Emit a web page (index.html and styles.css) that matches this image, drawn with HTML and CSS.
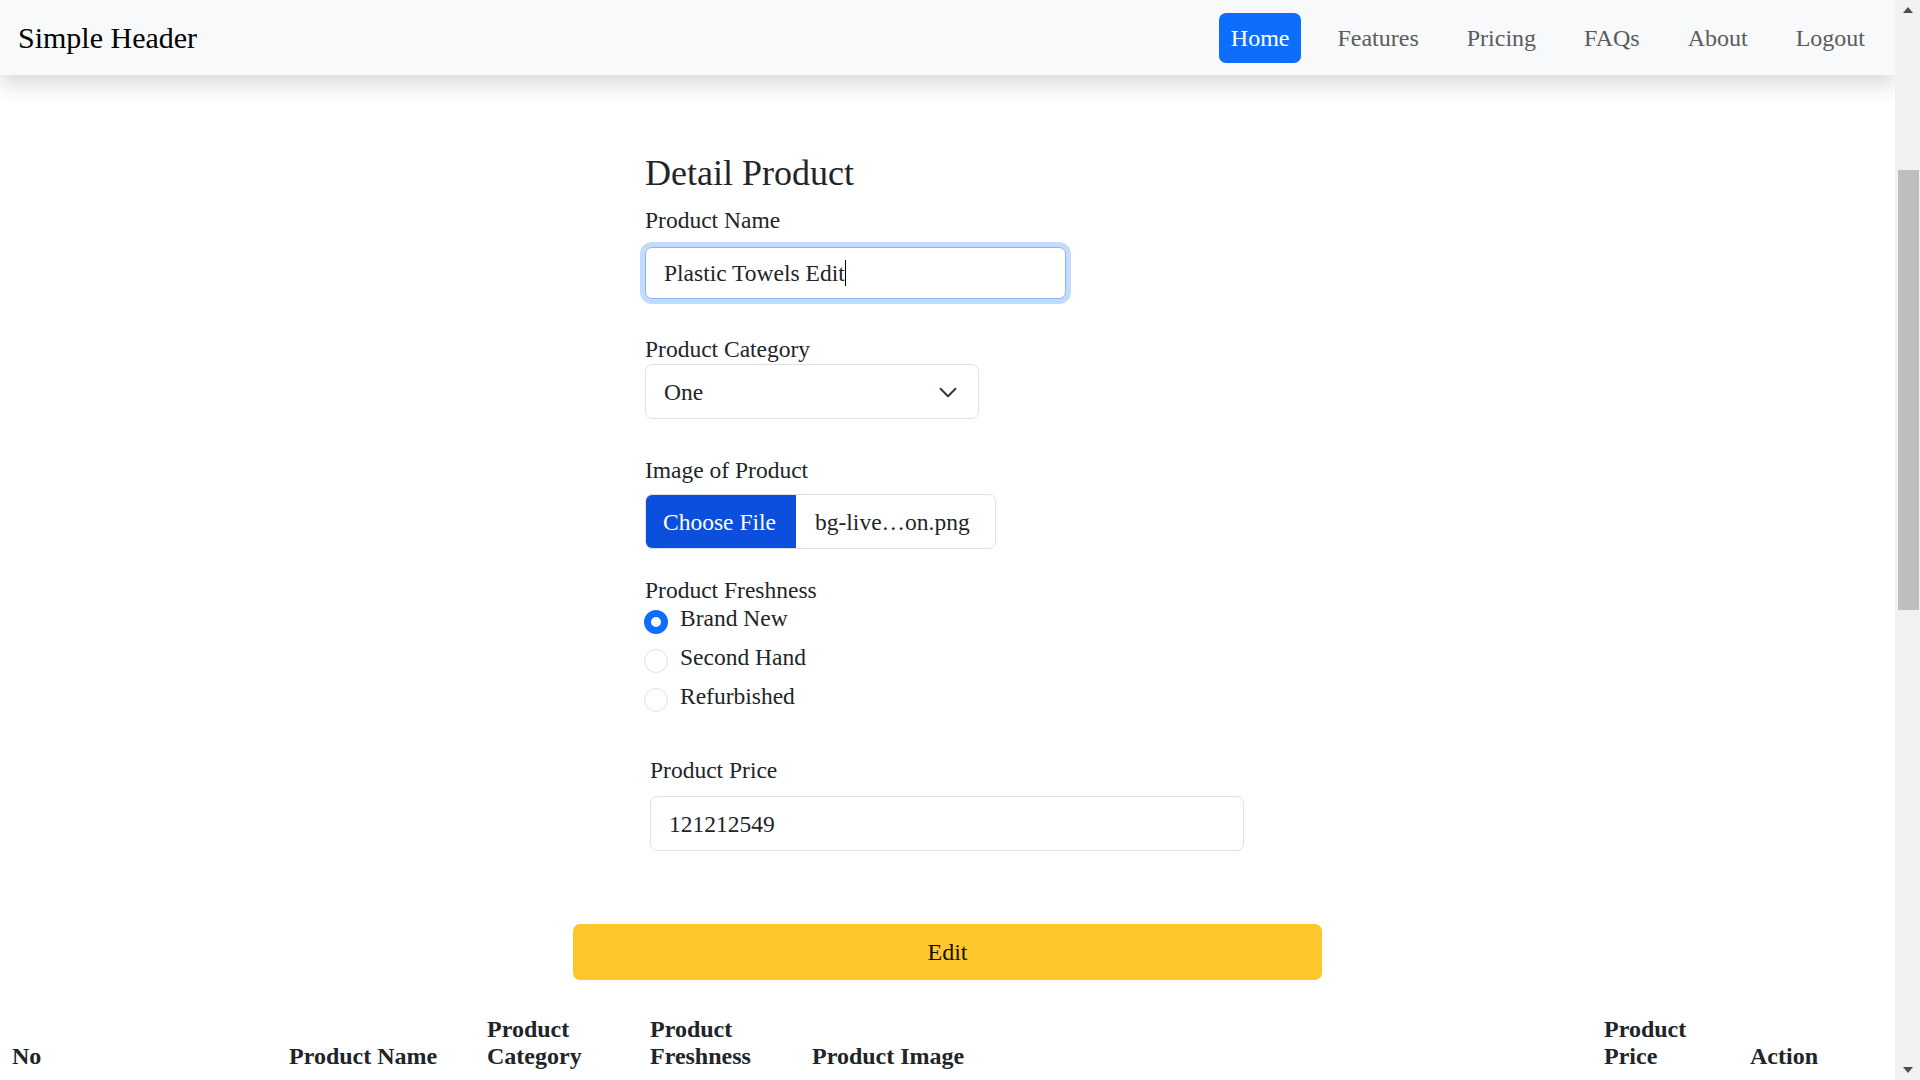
FILE: index.html
```html
<!DOCTYPE html>
<html lang="en">
<head>
<meta charset="utf-8">
<title>Detail Product</title>
<link rel="stylesheet" href="styles.css">
</head>
<body>
<div class="viewport">
  <div class="page">
    <header class="site-header">
      <span class="brand">Simple Header</span>
      <nav class="nav">
        <a class="nav-link active" href="#">Home</a>
        <a class="nav-link" href="#">Features</a>
        <a class="nav-link" href="#">Pricing</a>
        <a class="nav-link" href="#">FAQs</a>
        <a class="nav-link" href="#">About</a>
        <a class="nav-link" href="#">Logout</a>
      </nav>
    </header>

    <main class="content">
      <div class="form-area">
        <div class="form-inner">
          <h3 class="title">Detail Product</h3>

          <div class="group group-name">
            <div class="label label-gap">Product Name</div>
            <div class="control control-name is-focused"><span>Plastic Towels Edit</span><span class="caret"></span></div>
          </div>

          <div class="group group-category">
            <div class="label">Product Category</div>
            <div class="control control-select">
              <span>One</span>
              <svg class="chevron" width="20" height="15" viewBox="0 0 16 12" aria-hidden="true"><path d="M2 3l6 6 6-6" fill="none" stroke="#343a40" stroke-width="1.6" stroke-linecap="round" stroke-linejoin="round"/></svg>
            </div>
          </div>

          <div class="group group-image">
            <div class="label label-gap-file">Image of Product</div>
            <div class="file-control">
              <span class="file-btn">Choose File</span>
              <span class="file-name">bg-live…on.png</span>
            </div>
          </div>

          <div class="group group-fresh">
            <div class="label label-fresh">Product Freshness</div>
            <div class="radio-row"><span class="radio checked"></span><span class="radio-label">Brand New</span></div>
            <div class="radio-row"><span class="radio"></span><span class="radio-label">Second Hand</span></div>
            <div class="radio-row"><span class="radio"></span><span class="radio-label">Refurbished</span></div>
          </div>

          <div class="group group-price">
            <div class="label label-gap-price">Product Price</div>
            <div class="control control-price"><span>121212549</span></div>
          </div>
        </div>

        <button class="edit-btn" type="button">Edit</button>
      </div>

      <table class="product-table">
        <colgroup>
          <col class="c-no"><col class="c-name"><col class="c-cat"><col class="c-fresh"><col class="c-img"><col class="c-price"><col class="c-act">
        </colgroup>
        <thead>
          <tr>
            <th>No</th>
            <th>Product Name</th>
            <th>Product Category</th>
            <th>Product Freshness</th>
            <th>Product Image</th>
            <th>Product Price</th>
            <th>Action</th>
          </tr>
        </thead>
        <tbody></tbody>
      </table>
    </main>
  </div>

  <div class="scrollbar">
    <div class="sb-btn">
      <svg width="10" height="6" viewBox="0 0 10 6" aria-hidden="true"><path d="M0 6L5 0L10 6Z" fill="#505050"/></svg>
    </div>
    <div class="sb-thumb"></div>
    <div class="sb-space"></div>
    <div class="sb-btn">
      <svg width="10" height="6" viewBox="0 0 10 6" aria-hidden="true"><path d="M0 0L10 0L5 6Z" fill="#505050"/></svg>
    </div>
  </div>
</div>
</body>
</html>
```

FILE: styles.css
```css
* { box-sizing: border-box; }

html, body {
  margin: 0;
  padding: 0;
  height: 100%;
}

body {
  font-family: "Liberation Serif", "Times New Roman", serif;
  color: #212529;
  background: #ffffff;
  overflow: hidden;
}

.viewport {
  display: flex;
  height: 1080px;
}

.page {
  flex: 1;
  min-width: 0;
  overflow: hidden;
}

/* Header */
.site-header {
  position: relative;
  z-index: 1;
  height: 75px;
  background: #f8f9fa;
  display: flex;
  align-items: center;
  justify-content: space-between;
  padding: 0 18px;
  box-shadow: 0 10px 20px rgba(0, 0, 0, 0.15);
}

.brand {
  font-size: 30px;
  line-height: 34px;
  color: #000;
}

.nav {
  display: flex;
  gap: 24px;
}

.nav-link {
  font-size: 24px;
  line-height: 30px;
  padding: 10px 12px;
  color: #5a5b5c;
  text-decoration: none;
  border-radius: 7px;
}

.nav-link.active {
  background: #0d6efd;
  color: #ffffff;
}

/* Content */
.content {
  padding-top: 77px;
}

.form-area {
  width: 749px;
  margin: 0 auto;
}

.form-inner {
  padding-left: 72px;
}

.title {
  margin: 0 0 10px;
  font-size: 36px;
  line-height: 43px;
  font-weight: normal;
  color: #212529;
}

.label {
  font-size: 23.5px;
  line-height: 30px;
  color: #212529;
}

.label-gap { margin-bottom: 12px; }
.label-gap-file { margin-bottom: 9px; }
.label-gap-price { margin-bottom: 11px; }
.label-fresh { line-height: 25px; }

.group-name { margin-bottom: 35px; }
.group-category { margin-bottom: 36px; }
.group-image { margin-bottom: 29px; }
.group-fresh { margin-bottom: 44px; }

.control {
  display: flex;
  align-items: center;
  font-size: 23.5px;
  line-height: 30px;
  color: #212529;
  background: #ffffff;
  border: 1px solid #dee2e6;
  border-radius: 7px;
  padding: 0 18px;
}

.control-name {
  width: 421px;
  height: 52px;
}

.is-focused {
  border-color: #86b7fe;
  box-shadow: 0 0 0 5px #c2dbfe;
}

.caret {
  display: inline-block;
  width: 1px;
  height: 26px;
  background: #000;
}

.control-select {
  width: 334px;
  height: 55px;
  justify-content: space-between;
  padding-right: 20px;
}

.chevron {
  display: block;
  margin-top: 1px;
}

.file-control {
  display: flex;
  width: 351px;
  height: 55px;
  border: 1px solid #dee2e6;
  border-radius: 7px;
  overflow: hidden;
  font-size: 23.5px;
  line-height: 30px;
}

.file-btn {
  display: flex;
  align-items: center;
  background: #0b4fdc;
  color: #ffffff;
  padding: 0 18px;
  width: 151px;
  margin: -1px 0 -1px -1px;
}

.file-name {
  display: flex;
  align-items: center;
  padding-left: 19px;
  color: #212529;
}

.radio-row {
  display: flex;
  align-items: flex-start;
  height: 30px;
  margin-bottom: 9px;
  font-size: 23.5px;
  line-height: 30px;
}

.radio-row:last-child { margin-bottom: 0; }

.radio {
  width: 24px;
  height: 24px;
  margin-top: 7px;
  margin-right: 12px;
  margin-left: -1px;
  border-radius: 50%;
  border: 1px solid #dee2e6;
  background: #ffffff;
  flex: none;
}

.radio.checked {
  border: 7px solid #0d6efd;
}

.group-price {
  margin-left: 5px;
}

.control-price {
  width: 594px;
  height: 55px;
}

.edit-btn {
  display: block;
  width: 749px;
  height: 56px;
  margin-top: 73px;
  border: none;
  border-radius: 7px;
  background: #fec82c;
  color: #111;
  font-family: "Liberation Serif", "Times New Roman", serif;
  font-size: 24px;
  line-height: 30px;
  padding: 0;
}

/* Table */
.product-table {
  width: 100%;
  margin-top: 26px;
  border-collapse: collapse;
  table-layout: fixed;
}

.c-no { width: 277px; }
.c-name { width: 198px; }
.c-cat { width: 163px; }
.c-fresh { width: 162px; }
.c-img { width: 792px; }
.c-price { width: 146px; }
.c-act { width: 157px; }

.product-table th {
  text-align: left;
  vertical-align: bottom;
  padding: 10px 12px;
  font-size: 24px;
  font-weight: bold;
  line-height: 27px;
  color: #212529;
}

/* Scrollbar */
.scrollbar {
  width: 25px;
  flex: none;
  background: #f1f1f1;
  display: flex;
  flex-direction: column;
  align-items: center;
}

.sb-btn {
  height: 20px;
  width: 100%;
  display: flex;
  align-items: center;
  justify-content: center;
  flex: none;
}

.sb-thumb {
  width: 21px;
  height: 440px;
  margin-top: 150px;
  margin-left: 2px;
  background: #bebebe;
  flex: none;
}

.sb-space { flex: 1; }
```
